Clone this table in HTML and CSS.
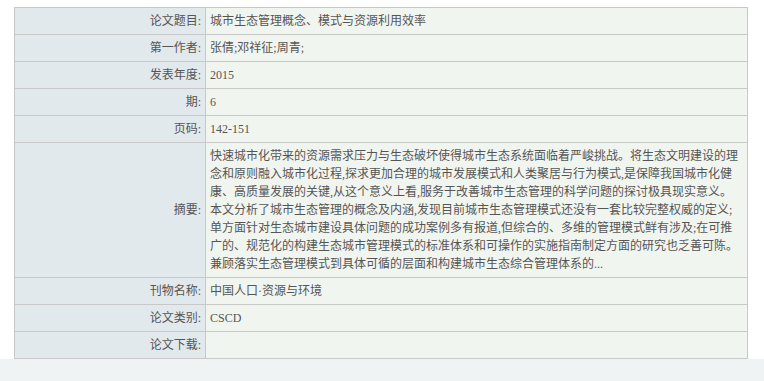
FILE: index.html
```html
<!DOCTYPE html>
<html lang="zh-CN">
<head>
    <meta charset="UTF-8">
    <meta name="viewport" content="width=device-width, initial-scale=1.0">
    <title>论文详情</title>
    <link rel="stylesheet" href="styles.css">
</head>
<body>
    <div class="content">
        <table class="info-table">
            <tr>
                <th>论文题目:</th>
                <td>城市生态管理概念、模式与资源利用效率</td>
            </tr>
            <tr>
                <th>第一作者:</th>
                <td>张倩;邓祥征;周青;</td>
            </tr>
            <tr>
                <th>发表年度:</th>
                <td>2015</td>
            </tr>
            <tr>
                <th>期:</th>
                <td>6</td>
            </tr>
            <tr>
                <th>页码:</th>
                <td>142-151</td>
            </tr>
            <tr>
                <th>摘要:</th>
                <td class="abstract">快速城市化带来的资源需求压力与生态破坏使得城市生态系统面临着严峻挑战。将生态文明建设的理念和原则融入城市化过程,探求更加合理的城市发展模式和人类聚居与行为模式,是保障我国城市化健康、高质量发展的关键,从这个意义上看,服务于改善城市生态管理的科学问题的探讨极具现实意义。本文分析了城市生态管理的概念及内涵,发现目前城市生态管理模式还没有一套比较完整权威的定义;单方面针对生态城市建设具体问题的成功案例多有报道,但综合的、多维的管理模式鲜有涉及;在可推广的、规范化的构建生态城市管理模式的标准体系和可操作的实施指南制定方面的研究也乏善可陈。兼顾落实生态管理模式到具体可循的层面和构建城市生态综合管理体系的...</td>
            </tr>
            <tr>
                <th>刊物名称:</th>
                <td>中国人口·资源与环境</td>
            </tr>
            <tr>
                <th>论文类别:</th>
                <td>CSCD</td>
            </tr>
            <tr>
                <th>论文下载:</th>
                <td></td>
            </tr>
        </table>
    </div>
    <div class="footer"></div>
</body>
</html>
```

FILE: styles.css
```css
body {
    margin: 0;
    font-family: "Liberation Serif", "Noto Sans CJK SC", serif;
    font-size: 12px;
    color: #555;
    background-color: #fff;
}
.content {
    padding: 7px 16px 0 14px;
}
.info-table {
    width: 734px;
    border-collapse: collapse;
    border: 1px solid #c8c8c8;
}
.info-table th, .info-table td {
    border: 1px solid #c8c8c8;
    padding: 4px 4px;
    line-height: 18px;
    vertical-align: middle;
}
.info-table th {
    width: 182px;
    text-align: right;
    font-weight: normal;
    background-color: #e2e9ec;
}
.info-table td {
    text-align: left;
    background-color: #f1f5f0;
}
.abstract {
    padding-right: 8px;
    word-break: break-all;
}
.footer {
    height: 22px;
    margin-top: 0;
    background-color: #f0f3f4;
}
```
